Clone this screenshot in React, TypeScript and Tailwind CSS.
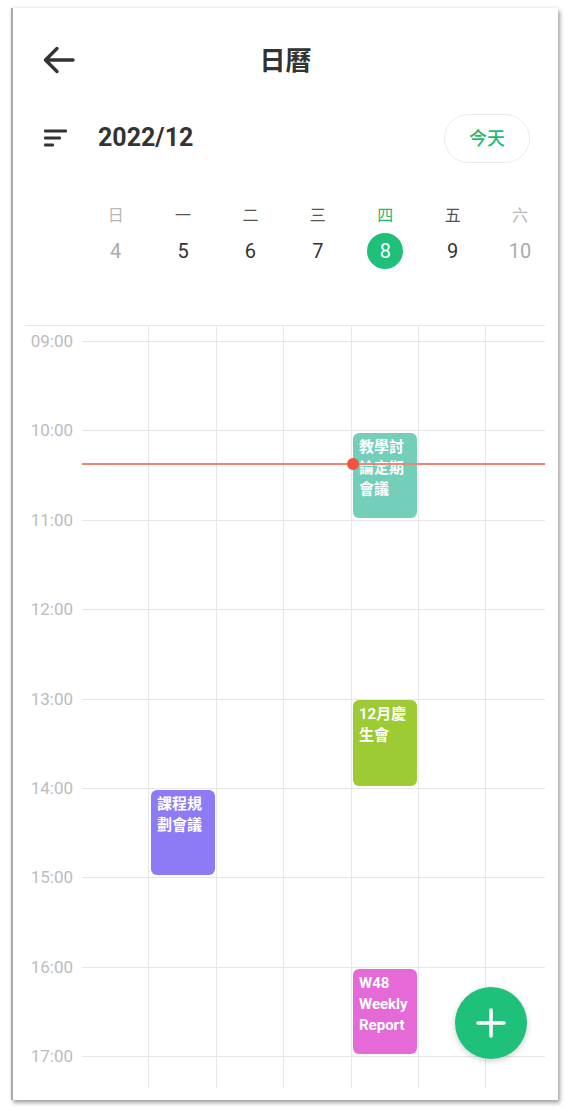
import React from "react";

const font = { fontFamily: '"Roboto", "Noto Sans CJK TC", sans-serif' };

const weekDays = [
  { label: "日", day: "4", muted: true },
  { label: "一", day: "5" },
  { label: "二", day: "6" },
  { label: "三", day: "7" },
  { label: "四", day: "8", today: true },
  { label: "五", day: "9" },
  { label: "六", day: "10", muted: true },
];

const hours = ["09:00", "10:00", "11:00", "12:00", "13:00", "14:00", "15:00", "16:00"];

const BackArrow = () => (
  <svg width="34" height="30" viewBox="0 0 34 30" fill="none">
    <path d="M31 15H4" stroke="#333" strokeWidth="3.4" strokeLinecap="round" />
    <path d="M15 3.5L3.5 15L15 26.5" stroke="#333" strokeWidth="3.4" strokeLinecap="round" strokeLinejoin="round" />
  </svg>
);

const SortIcon = () => (
  <svg width="24" height="18" viewBox="0 0 24 18" fill="#333">
    <rect x="0" y="0.5" width="23" height="3" rx="1" />
    <rect x="0" y="7.5" width="17" height="3" rx="1" />
    <rect x="0" y="14.5" width="10" height="3" rx="1" />
  </svg>
);

const App: React.FC = () => {
  return (
    <div className="w-[570px] h-[1116px] bg-white pt-[8px] pl-[11px]" style={font}>
      <div className="relative w-[547px] h-[1092px] bg-white border-l-2 border-[#a8a8a8] shadow-[2px_3px_4px_rgba(0,0,0,0.35),0_-1px_3px_rgba(0,0,0,0.08)]">
        {/* top bar */}
        <div className="h-[104px] flex items-center">
          <div className="w-[90px] pl-[29px] flex items-center">
            <BackArrow />
          </div>
          <div className="flex-1 text-center text-[26px] font-bold text-[#333] pt-[3px]">日曆</div>
          <div className="w-[90px]" />
        </div>

        {/* month row */}
        <div className="h-[52px] flex items-center pl-[31px] pr-[28px]">
          <SortIcon />
          <div className="ml-[30px] text-[25px] font-bold text-[#333]">2022/12</div>
          <div className="flex-1" />
          <button className="w-[86px] h-[49px] rounded-full border border-[#ebebeb] text-[18px] font-medium text-[#1fba72]">
            今天
          </button>
        </div>

        {/* week header */}
        <div className="mt-[42px] pl-[69px] flex">
          {weekDays.map((d) => (
            <div key={d.day} className="w-[67.4px] flex flex-col items-center">
              <div
                className={`h-[20px] leading-[20px] text-[16px] ${
                  d.today ? "text-[#1fba72]" : d.muted ? "text-[#b8b8b8]" : "text-[#555]"
                }`}
              >
                {d.label}
              </div>
              <div
                className={`mt-[7px] w-[36px] h-[36px] rounded-full flex items-center justify-center text-[20px] ${
                  d.today ? "bg-[#1fc07a] text-white" : d.muted ? "text-[#aaa]" : "text-[#333]"
                }`}
              >
                {d.day}
              </div>
            </div>
          ))}
        </div>

        {/* time grid */}
        <div className="relative mt-[56px] ml-[12px] w-[520px] h-[763px] border-t border-[#e8e8e8]">
          <div className="pt-[15px]">
            {hours.map((h) => (
              <div key={h} className="h-[89.4px] flex">
                <div className="w-[57px] pr-[9px] text-right text-[17px] leading-[20px] text-[#bcbcbc] relative -top-[10px]">
                  {h}
                </div>
                <div className="flex-1 border-t border-[#e6e6e6]" />
              </div>
            ))}
            <div className="h-[33px] flex">
              <div className="w-[57px] pr-[9px] text-right text-[17px] leading-[20px] text-[#bcbcbc] relative -top-[10px]">
                17:00
              </div>
              <div className="flex-1 border-t border-[#e6e6e6]" />
            </div>
          </div>

          {/* day column lines */}
          <div className="absolute top-0 bottom-0 left-[57px] flex">
            {[0, 1, 2, 3, 4, 5].map((i) => (
              <div key={i} className="w-[67.4px] h-full border-r border-[#e6e6e6]" />
            ))}
          </div>

          {/* events */}
          <div className="absolute left-[328px] top-[107px] w-[64px] h-[85px] rounded-[6px] bg-[#73cfb9] px-[6px] pt-[4px] text-[15px] leading-[21px] font-bold text-white">
            教學討論定期會議
          </div>
          <div className="absolute left-[328px] top-[374px] w-[64px] h-[86px] rounded-[6px] bg-[#9dcb33] px-[6px] pt-[4px] text-[15px] leading-[21px] font-bold text-white">
            12月慶生會
          </div>
          <div className="absolute left-[126px] top-[464px] w-[64px] h-[85px] rounded-[6px] bg-[#8c7bf5] px-[6px] pt-[4px] text-[15px] leading-[21px] font-bold text-white">
            課程規劃會議
          </div>
          <div className="absolute left-[328px] top-[643px] w-[64px] h-[85px] rounded-[6px] bg-[#e56ad8] px-[6px] pt-[4px] text-[15px] leading-[21px] font-bold text-white">
            W48 Weekly Report
          </div>

          {/* current time */}
          <div className="absolute left-[57px] right-0 top-[137px] h-[2px] bg-[#ef8576]" />
          <div className="absolute left-[322px] top-[132px] w-[12px] h-[12px] rounded-full bg-[#f2533f]" />
        </div>

        {/* add button */}
        <button className="absolute left-[442px] top-[979px] w-[72px] h-[72px] rounded-full bg-[#1fc07a] shadow-[0_2px_6px_rgba(0,0,0,0.2)] flex items-center justify-center">
          <svg width="32" height="32" viewBox="0 0 32 32">
            <path d="M16 3V29M3 16H29" stroke="white" strokeWidth="3.6" strokeLinecap="round" />
          </svg>
        </button>
      </div>
    </div>
  );
};

export default App;
